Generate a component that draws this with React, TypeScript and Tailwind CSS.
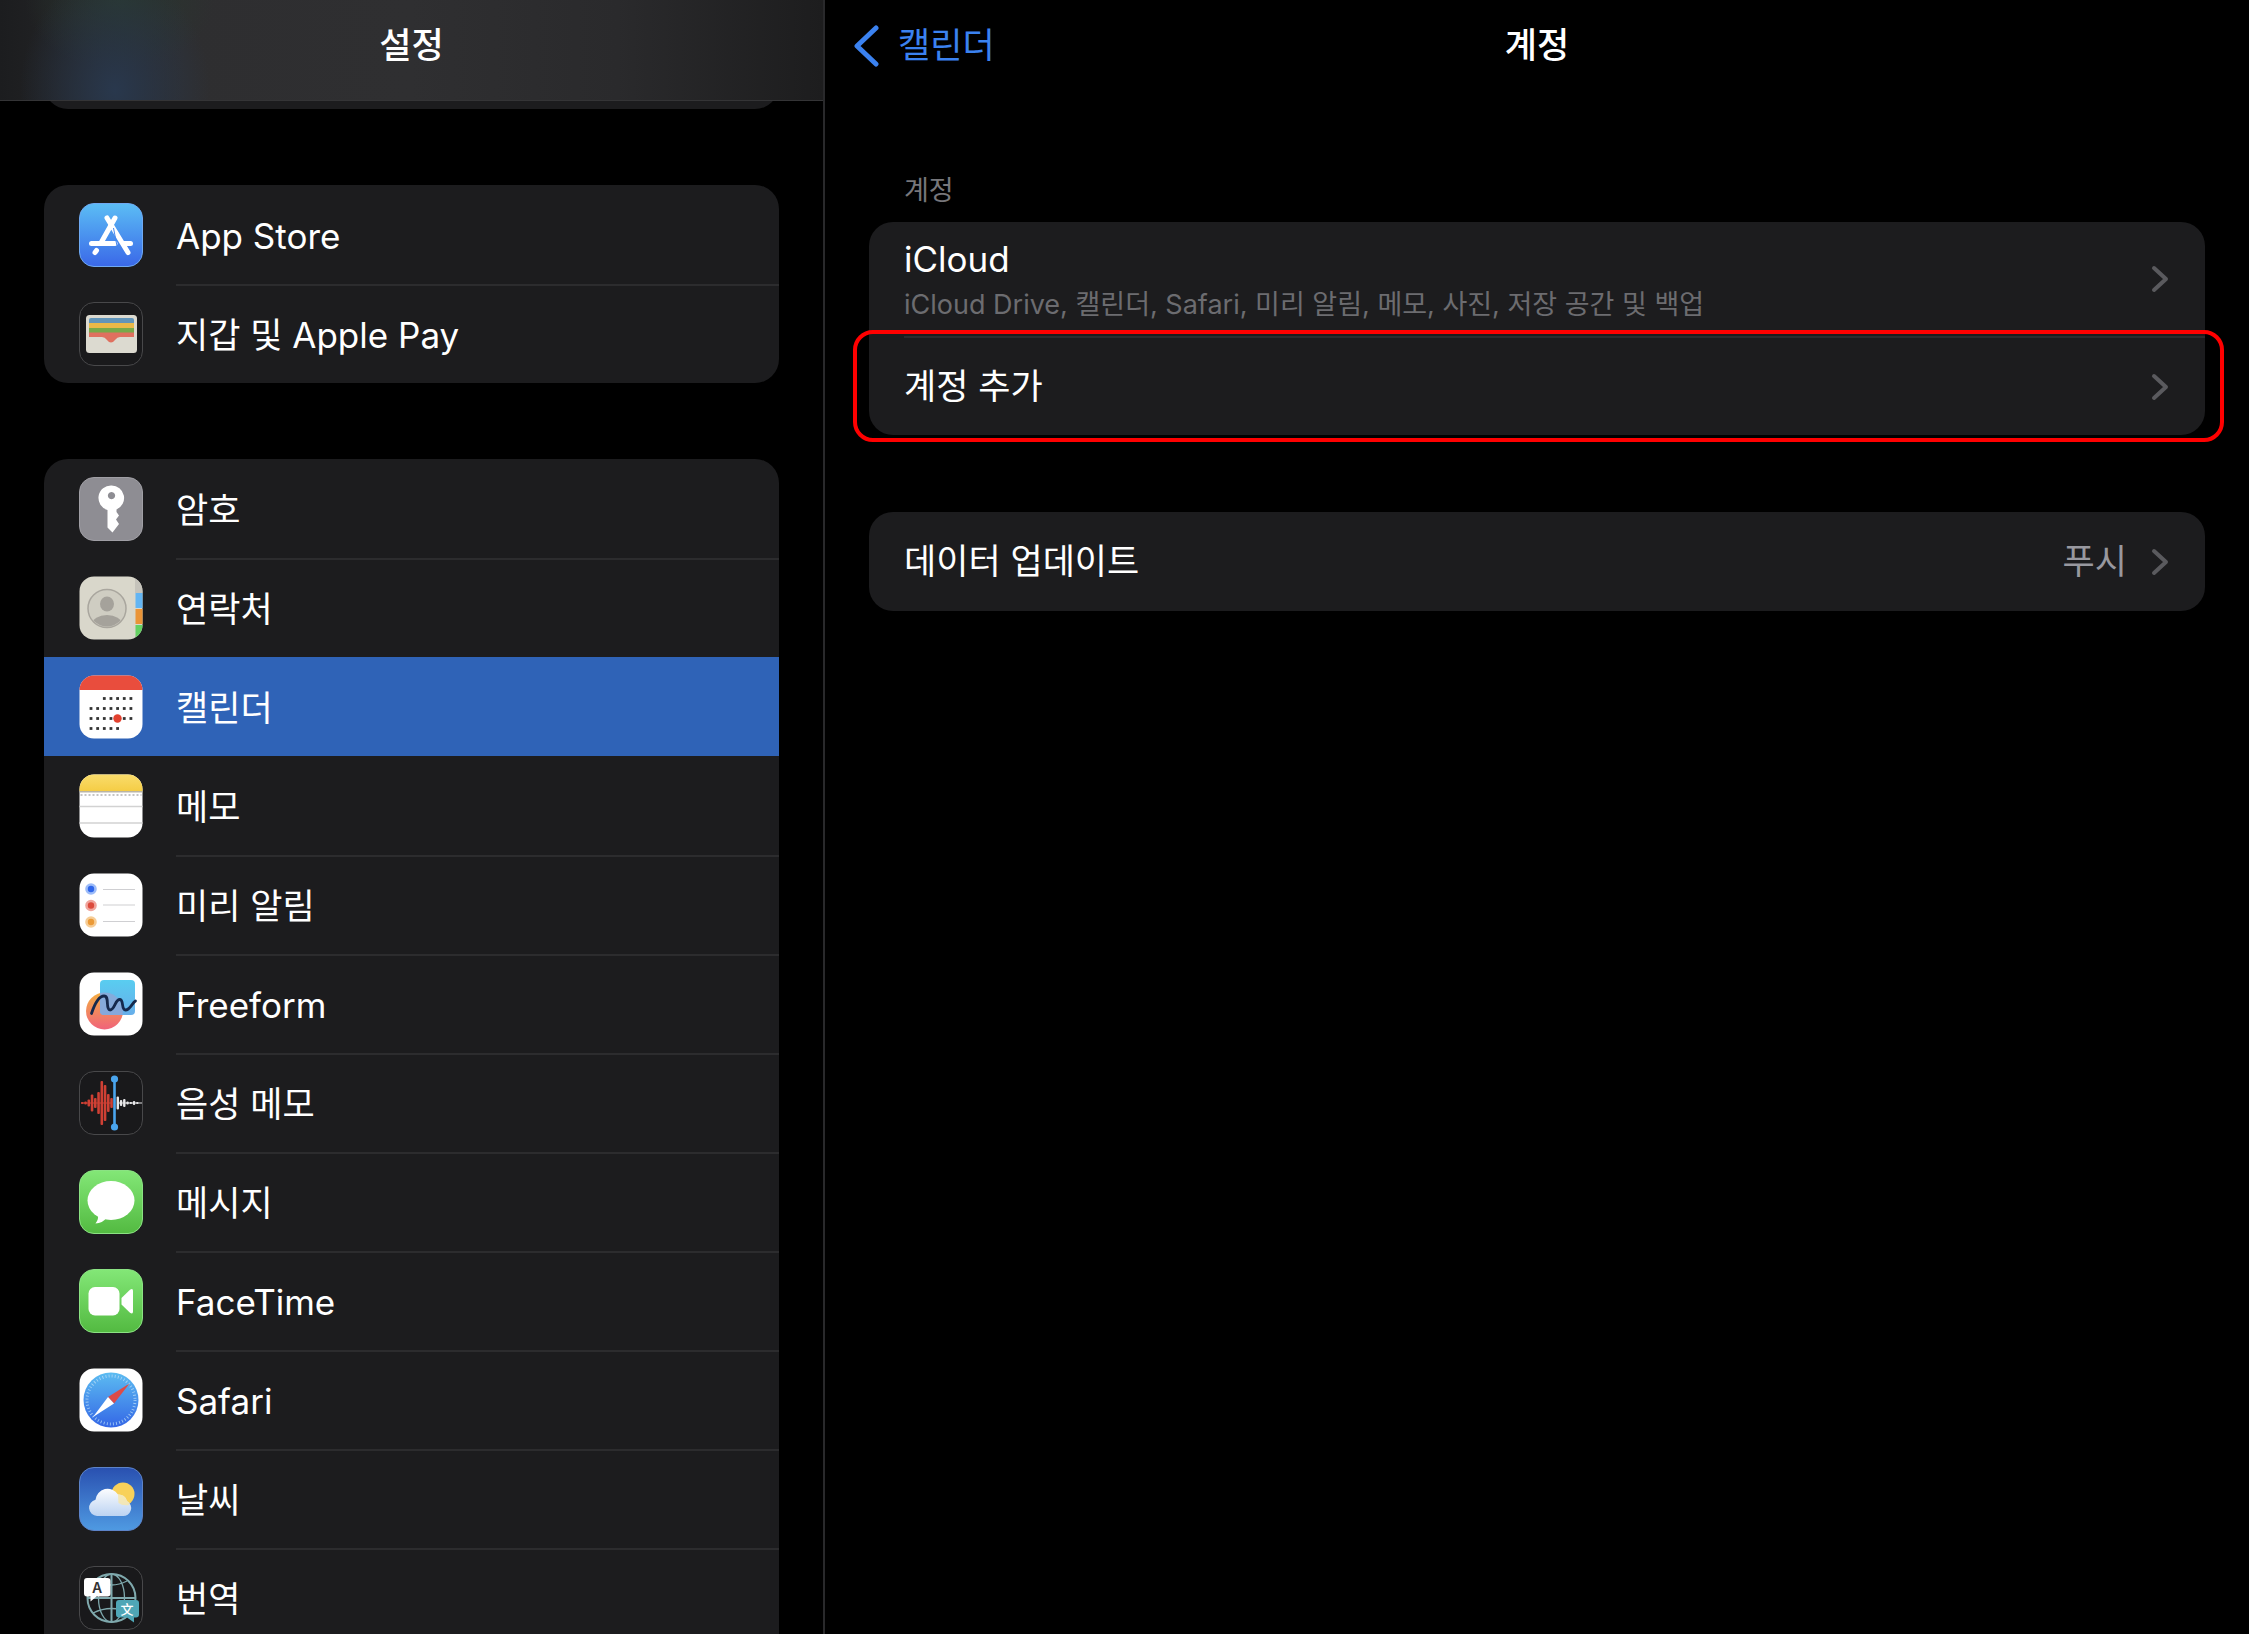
import { ReactNode } from "react";

interface SettingsItem {
  id: string,
  label: string,
  icon: ReactNode,
}

interface TileProps {
  fill: string,
  stroke?: string,
  children?: ReactNode,
}

// every app icon is drawn on the same 64 unit rounded tile
const Tile = (props: TileProps) => {
  return (
    <svg viewBox="0 0 64 64" className="size-16 shrink-0" aria-hidden="true">
      <rect x="0.5" y="0.5" width="63" height="63" rx="14.5" fill={props.fill} stroke={props.stroke ?? "none"} />
      {props.children}
    </svg>
  )
}

const AppStoreIcon = () => (
  <Tile fill="url(#appstore-bg)" stroke="#6fa9f2">
    <defs>
      <linearGradient id="appstore-bg" x1="0" y1="0" x2="0" y2="1">
        <stop offset="0" stopColor="#5bbdf5" />
        <stop offset="1" stopColor="#3a68e8" />
      </linearGradient>
    </defs>
    <g stroke="#fff" strokeWidth="5" strokeLinecap="round" fill="none">
      <path d="M36 15 L22.5 39" />
      <path d="M28 15 L49 49.5" />
      <path d="M12.5 40.5 H36" />
      <path d="M44.5 40.5 H51.5" />
      <path d="M17.5 47.5 L16 49.5" />
    </g>
    <path d="M34.5 25 L38 43" stroke="#4688ee" strokeWidth="1" />
  </Tile>
)

const WalletIcon = () => (
  <Tile fill="#1a1a1c" stroke="#48484a">
    <rect x="7" y="13" width="51" height="38" rx="3.5" fill="#dcdad0" />
    <path d="M10 18 q0 -2 2 -2 h41 q2 0 2 2 v5 h-45 z" fill="#6195ba" />
    <rect x="10" y="21" width="45" height="6" fill="#e9b949" />
    <rect x="10" y="26" width="45" height="6" fill="#77a94a" />
    <path d="M10 30.5 h45 v4.5 H41 q-3 0 -4.5 2.5 q-4.5 6 -9 0 q-1.5 -2.5 -4.5 -2.5 H10 z" fill="#e0705f" />
  </Tile>
)

const KeyIcon = () => (
  <Tile fill="#8e8d93" stroke="#a09fa5">
    <path
      fillRule="evenodd"
      fill="#fff"
      d="M32.5 8.5 a12.5 12.5 0 0 1 5 24 v2.5 l2.5 3.5 -3 4 3 4.5 -6.5 8.5 -5 -5 v-17.5 a12.5 12.5 0 0 1 4 -24.5 z M32.5 15 a3.6 3.6 0 1 0 .01 0 z"
    />
  </Tile>
)

const ContactsIcon = () => (
  <Tile fill="#d9d7cb">
    <clipPath id="contacts-clip">
      <rect x="0.5" y="0.5" width="63" height="63" rx="14.5" />
    </clipPath>
    <clipPath id="contacts-face">
      <circle cx="28" cy="32.5" r="18" />
    </clipPath>
    <g clipPath="url(#contacts-clip)">
      <rect x="56" y="0" width="8" height="17" fill="#c5c3bb" />
      <rect x="56.5" y="17" width="8" height="15" fill="#63b5f3" />
      <rect x="56.5" y="33" width="8" height="15" fill="#ea9437" />
      <rect x="56.5" y="49" width="8" height="15" fill="#64d062" />
    </g>
    <circle cx="28" cy="32.5" r="19" fill="#cfcdc2" stroke="#a9a69e" strokeWidth="1.5" />
    <ellipse cx="28" cy="28" rx="7" ry="7.5" fill="#a5a29b" />
    <ellipse cx="28" cy="48" rx="15" ry="9" fill="#a5a29b" clipPath="url(#contacts-face)" />
  </Tile>
)

const calendarRows = [
  { y: 23.5, from: 2, to: 6 },
  { y: 33.5, from: 0, to: 6 },
  { y: 43.5, from: 0, to: 6 },
  { y: 53.5, from: 0, to: 4 },
]

const CalendarIcon = () => {
  const dots = []
  for (const row of calendarRows) {
    for (let i = row.from; i <= row.to; i++) {
      dots.push(<rect key={`${row.y}-${i}`} x={10.6 + i * 6.65} y={row.y - 1.4} width="2.8" height="2.8" fill="#333" />)
    }
  }
  return (
    <Tile fill="#fff">
      <path d="M0.5 15 a14.5 14.5 0 0 1 14.5 -14.5 h34 a14.5 14.5 0 0 1 14.5 14.5 z" fill="#e94d3d" />
      {dots}
      <circle cx="38.5" cy="43.5" r="4.2" fill="#e2412f" />
    </Tile>
  )
}

const NotesIcon = () => (
  <Tile fill="#fff">
    <defs>
      <linearGradient id="notes-bg" x1="0" y1="0" x2="0" y2="1">
        <stop offset="0" stopColor="#f9dc6c" />
        <stop offset="1" stopColor="#f5cd45" />
      </linearGradient>
    </defs>
    <path d="M0.5 17 v-2 a14.5 14.5 0 0 1 14.5 -14.5 h34 a14.5 14.5 0 0 1 14.5 14.5 v2 z" fill="url(#notes-bg)" />
    <path d="M0.5 17.8 h63" stroke="#b9b4a4" strokeWidth="1.5" />
    <path d="M1.5 21 h61" stroke="#c4c4c4" strokeWidth="2" strokeDasharray="2 2" />
    <path d="M0.5 32.5 h63 M0.5 49 h63" stroke="#d2d2d2" strokeWidth="1.4" />
  </Tile>
)

const RemindersIcon = () => (
  <Tile fill="#fff">
    <g strokeWidth="2.6">
      <circle cx="12" cy="16" r="4.5" fill="#2f66ea" stroke="#9dbcf8" />
      <circle cx="12" cy="32.5" r="4.5" fill="#dc4a3c" stroke="#f0a59d" />
      <circle cx="12" cy="49" r="4.5" fill="#eb9a37" stroke="#f6cd97" />
    </g>
    <path d="M24 16.5 h32 M24 32 h32 M24 48.5 h32" stroke="#cfcfd2" strokeWidth="1.2" />
  </Tile>
)

const FreeformIcon = () => (
  <Tile fill="#fff">
    <defs>
      <linearGradient id="freeform-circle" x1="0" y1="0" x2="0" y2="1">
        <stop offset="0" stopColor="#f3ae42" />
        <stop offset="1" stopColor="#f0637a" />
      </linearGradient>
      <linearGradient id="freeform-square" x1="0" y1="0" x2="0" y2="1">
        <stop offset="0" stopColor="#59cdf0" />
        <stop offset="1" stopColor="#67aeea" />
      </linearGradient>
    </defs>
    <circle cx="25.5" cy="39" r="18.5" fill="url(#freeform-circle)" />
    <rect x="21" y="8" width="35" height="35" rx="4" fill="url(#freeform-square)" />
    <path d="M21 21 a18.5 18.5 0 0 1 22.5 22 H25 a4 4 0 0 1 -4 -4 z" fill="#8fa6d6" opacity="0.8" />
    <path
      d="M12.5 41.5 C15 34 19 24 25 24 C31 24 26 37 31 38 C36 38 36 27 41 27.5 C45 28 42 38 46.5 38 C51 38 53 31 56.5 29"
      fill="none"
      stroke="#15294d"
      strokeWidth="2.8"
      strokeLinecap="round"
    />
  </Tile>
)

// half heights of the recorded bars, left to right
const redWave = [1, 1.5, 3.5, 8.5, 5, 11, 22, 18, 9, 5]
const whiteWave = [6.5, 3, 4, 1.5, 1, 2, 1]

const VoiceMemosIcon = () => (
  <Tile fill="#19191b" stroke="#48484a">
    {redWave.map((h, i) => (
      <rect key={i} x={2 + i * 3.25} y={32 - h} width="2.6" height={h * 2} rx="1" fill="#cf4034" />
    ))}
    {whiteWave.map((h, i) => (
      <rect key={i} x={37.6 + i * 3.25} y={32 - h} width="2.4" height={h * 2} rx="1" fill="#e8e8ea" />
    ))}
    <path d="M2 32 h30" stroke="#cf4034" />
    <path d="M38 32 h25" stroke="#e8e8ea" />
    <path d="M35.5 8 v48" stroke="#4aa5ee" strokeWidth="2.6" />
    <circle cx="35.5" cy="8" r="3.6" fill="#4aa5ee" />
    <circle cx="35.5" cy="56" r="3.6" fill="#4aa5ee" />
  </Tile>
)

const MessagesIcon = () => (
  <Tile fill="url(#green-bg)" stroke="#8be283">
    <defs>
      <linearGradient id="green-bg" x1="0" y1="0" x2="0" y2="1">
        <stop offset="0" stopColor="#83e777" />
        <stop offset="1" stopColor="#53ba41" />
      </linearGradient>
    </defs>
    <ellipse cx="32" cy="30.5" rx="23.5" ry="19.5" fill="#fff" />
    <path d="M19 44 q1 5 -2.5 9.5 q7 -0.5 11 -5.5 z" fill="#fff" />
  </Tile>
)

const FaceTimeIcon = () => (
  <Tile fill="url(#green-bg)" stroke="#8be283">
    <rect x="9.5" y="18" width="31" height="28.5" rx="6.5" fill="#fff" />
    <path d="M42.5 29 L51 20.8 q3 -2 3 1.2 v20.5 q0 3.2 -3 1.2 L42.5 35.5 z" fill="#fff" />
  </Tile>
)

const SafariIcon = () => (
  <Tile fill="#fff">
    <defs>
      <linearGradient id="safari-bg" x1="0" y1="0" x2="0" y2="1">
        <stop offset="0" stopColor="#5cbcf1" />
        <stop offset="1" stopColor="#3467e6" />
      </linearGradient>
    </defs>
    <circle cx="32" cy="32" r="27.5" fill="url(#safari-bg)" />
    <circle cx="32" cy="32" r="24" fill="none" stroke="#b8dcf8" strokeWidth="3" strokeDasharray="0.9 2.241" opacity="0.8" />
    <path d="M50.5 15.5 L35 35.5 L29 29 z" fill="#dd4b48" />
    <path d="M14 49 L29 29 L35 35.5 z" fill="#fff" />
  </Tile>
)

const WeatherIcon = () => (
  <Tile fill="url(#weather-bg)" stroke="#5d83c8">
    <defs>
      <linearGradient id="weather-bg" x1="0" y1="0" x2="0" y2="1">
        <stop offset="0" stopColor="#2950b0" />
        <stop offset="1" stopColor="#4f9ae2" />
      </linearGradient>
      <linearGradient id="cloud-bg" x1="0" y1="0" x2="0" y2="1">
        <stop offset="0" stopColor="#fbfcfe" />
        <stop offset="1" stopColor="#bcd3f2" />
      </linearGradient>
    </defs>
    <circle cx="44" cy="27" r="11.5" fill="#f8d15a" />
    <path
      d="M18 49 a8.2 8.2 0 0 1 -1.5 -16.2 a12.2 12.2 0 0 1 22.5 -5.3 a8.5 8.5 0 0 1 9 6.5 a8 8 0 0 1 -4.5 15 z"
      fill="url(#cloud-bg)"
    />
    <path d="M39 27.5 a8.5 8.5 0 0 1 9 6.5 q2 1.5 2.5 4 q-7 1 -11 -2 z" fill="#f7e6a6" opacity="0.8" />
  </Tile>
)

const TranslateIcon = () => (
  <Tile fill="#19191b" stroke="#48484a">
    <g fill="none" stroke="#7fa9ad">
      <g strokeWidth="2">
        <circle cx="32.5" cy="32" r="24" />
        <path d="M32.5 8 v48 M8.5 32 h48" />
      </g>
      <g strokeWidth="1.3">
        <ellipse cx="32.5" cy="32" rx="13" ry="24" />
        <path d="M17 15 q15.5 8 31 0 M14 47 q18.5 -9 37 0" />
      </g>
    </g>
    <path d="M8 12 h20.5 q3 0 3 3 v12.5 q0 3 -3 3 h-11 l-6 5 v-5 h-3.5 q-3 0 -3 -3 v-12.5 q0 -3 3 -3 z" fill="#fff" />
    <text x="18" y="26.5" textAnchor="middle" fontSize="14" fontWeight="600" fill="#333" className="font-['Inter',sans-serif]">A</text>
    <path d="M40 34 h17 q3 0 3 3 v11.5 q0 3 -3 3 h-2 v5 l-7 -5 h-8 q-3 0 -3 -3 v-11.5 q0 -3 3 -3 z" fill="#4fa6b6" />
    <text x="48" y="48" textAnchor="middle" fontSize="13" fontWeight="500" fill="#fff" className="font-['Noto_Sans_CJK_SC',sans-serif]">文</text>
  </Tile>
)

const storeItems: SettingsItem[] = [
  { id: "appstore", label: "App Store", icon: <AppStoreIcon /> },
  { id: "wallet", label: "지갑 및 Apple Pay", icon: <WalletIcon /> },
]

const appItems: SettingsItem[] = [
  { id: "passwords", label: "암호", icon: <KeyIcon /> },
  { id: "contacts", label: "연락처", icon: <ContactsIcon /> },
  { id: "calendar", label: "캘린더", icon: <CalendarIcon /> },
  { id: "notes", label: "메모", icon: <NotesIcon /> },
  { id: "reminders", label: "미리 알림", icon: <RemindersIcon /> },
  { id: "freeform", label: "Freeform", icon: <FreeformIcon /> },
  { id: "voicememos", label: "음성 메모", icon: <VoiceMemosIcon /> },
  { id: "messages", label: "메시지", icon: <MessagesIcon /> },
  { id: "facetime", label: "FaceTime", icon: <FaceTimeIcon /> },
  { id: "safari", label: "Safari", icon: <SafariIcon /> },
  { id: "weather", label: "날씨", icon: <WeatherIcon /> },
  { id: "translate", label: "번역", icon: <TranslateIcon /> },
]

interface SettingsGroupProps {
  items: SettingsItem[],
  selectedId: string,
  openEnded?: boolean,
}

const SettingsGroup = (props: SettingsGroupProps) => {
  const selectedIndex = props.items.findIndex(item => item.id === props.selectedId)

  return (
    <ul className={`shrink-0 overflow-hidden bg-[#1c1c1e] ${props.openEnded ? "rounded-t-3xl" : "rounded-3xl"}`}>
      {props.items.map((item, index) => {
        const selected = index === selectedIndex
        // no line above the first row or on either side of the selected one
        const hasLine = index > 0 && !selected && !(selectedIndex >= 0 && index === selectedIndex + 1)
        return (
          <li key={item.id}>
            <button
              type="button"
              aria-current={selected ? "page" : undefined}
              className={`flex h-[99px] w-full cursor-pointer items-center gap-[33px] pl-[35px] text-left ${selected ? "bg-[#2f63b7]" : ""}`}>
              {item.icon}
              <span className={`flex h-full flex-1 items-center border-t-2 pt-0.5 text-[35px] ${hasLine ? "border-[#2c2c2e]" : "border-transparent"}`}>
                {item.label}
              </span>
            </button>
          </li>
        )
      })}
    </ul>
  )
}

const Chevron = () => {
  return (
    <svg viewBox="0 0 18 28" className="h-7 w-[18px] shrink-0" fill="none" aria-hidden="true">
      <path d="M3 3 L15 14 L3 25" stroke="#5a5a5e" strokeWidth="4" strokeLinecap="round" strokeLinejoin="round" />
    </svg>
  )
}

const Sidebar = () => {
  return (
    <aside className="flex w-[825px] shrink-0 flex-col overflow-hidden border-r-2 border-[#29292b]">
      <header className="relative z-10 flex h-[101px] shrink-0 items-center justify-center border-b border-[#343436] bg-[radial-gradient(ellipse_95px_120px_at_115px_90px,#29384d_0%,transparent_100%),radial-gradient(ellipse_95px_70px_at_120px_0px,#29372f_0%,transparent_100%),linear-gradient(90deg,#1c1d1f_0%,#2e2e30_22%,#2f2f31_50%,#2a2a2c_75%,#1d1d1e_100%)] pb-2.5">
        <h1 className="text-[35px] font-medium">설정</h1>
      </header>
      <nav className="flex flex-col gap-[76px] px-11">
        {/* tail of the group that is scrolled under the header */}
        <div className="-mt-10 h-12 shrink-0 rounded-3xl bg-[#1c1c1e]" />
        <SettingsGroup items={storeItems} selectedId="calendar" />
        <SettingsGroup items={appItems} selectedId="calendar" openEnded />
      </nav>
    </aside>
  )
}

const AccountsPane = () => {
  return (
    <main className="flex min-w-0 flex-1 flex-col">
      <header className="grid h-[101px] grid-cols-3 items-center px-7 pb-2.5">
        <button type="button" className="flex cursor-pointer items-center gap-[19px] justify-self-start text-[35px] text-[#3b82f0]">
          <svg viewBox="0 0 26 44" className="h-11 w-[26px]" fill="none" aria-hidden="true">
            <path d="M23 4 L4 22 L23 40" stroke="currentColor" strokeWidth="5" strokeLinecap="round" strokeLinejoin="round" />
          </svg>
          캘린더
        </button>
        <h2 className="text-center text-[35px] font-medium">계정</h2>
      </header>

      <div className="flex flex-col px-11">
        <h3 className="mt-[70px] pl-[35px] text-[27px] leading-10 text-[#77777b]">계정</h3>
        <ul className="mt-[11px] rounded-3xl bg-[#1c1c1e]">
          <li>
            <button type="button" className="flex h-[114px] w-full cursor-pointer items-center justify-between pl-[35px] pr-9 text-left">
              <span className="flex flex-col pt-1.5">
                <span className="text-[35px] leading-[46px]">iCloud</span>
                <span className="text-[27px] leading-[46px] text-[#6c6c70]">
                  iCloud Drive, 캘린더, Safari, 미리 알림, 메모, 사진, 저장 공간 및 백업
                </span>
              </span>
              <Chevron />
            </button>
          </li>
          <li className="relative pl-[35px]">
            <button type="button" className="flex h-[99px] w-full cursor-pointer items-center justify-between border-t-2 border-[#2c2c2e] pr-9 text-left text-[35px]">
              계정 추가
              <Chevron />
            </button>
            <div className="pointer-events-none absolute -bottom-[7px] -left-4 -right-[19px] -top-[6px] rounded-[20px] border-4 border-[#ff0000]" />
          </li>
        </ul>

        <button type="button" className="mt-[77px] flex h-[99px] cursor-pointer items-center rounded-3xl bg-[#1c1c1e] pl-[35px] pr-9 text-[35px]">
          데이터 업데이트
          <span className="ml-auto mr-6 text-[#98989f]">푸시</span>
          <Chevron />
        </button>
      </div>
    </main>
  )
}

export default function App() {
  return (
    <div className="flex h-screen overflow-hidden bg-black font-['Inter','Noto_Sans_CJK_KR',sans-serif] text-white">
      <Sidebar />
      <AccountsPane />
    </div>
  )
}
